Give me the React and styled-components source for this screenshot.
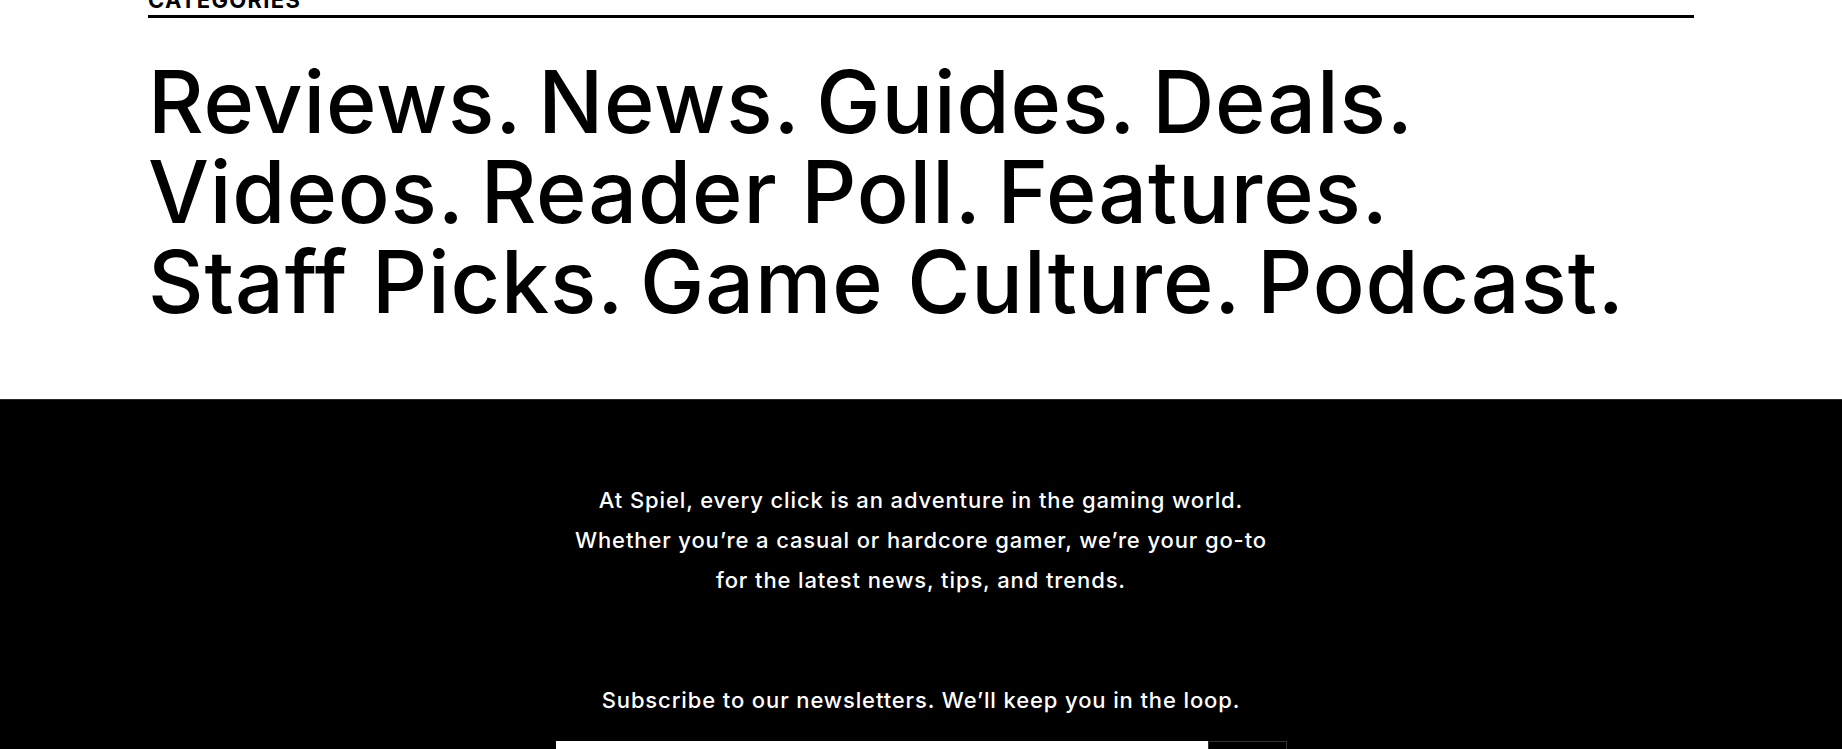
import React from "react";
import styled, { createGlobalStyle } from "styled-components";

const rows = [
  ["Reviews", "News", "Guides", "Deals"],
  ["Videos", "Reader Poll", "Features"],
  ["Staff Picks", "Game Culture", "Podcast"],
];

function App() {
  return (
    <>
      <GlobalStyle />
      <Categories>
        <Label>Categories</Label>
        <CategoryList>
          {rows.map((row, idx) => (
            <Row key={idx}>
              {row.map((name) => (
                <Item key={name} href="#">{name}.</Item>
              ))}
            </Row>
          ))}
        </CategoryList>
      </Categories>
      <Footer>
        <About>
          At Spiel, every click is an adventure in the gaming world.
          <br />
          Whether you’re a casual or hardcore gamer, we’re your go-to
          <br />
          for the latest news, tips, and trends.
        </About>
        <Subscribe>Subscribe to our newsletters. We’ll keep you in the loop.</Subscribe>
        <Form onSubmit={(e) => e.preventDefault()}>
          <input type="email" aria-label="Email" />
          <button type="submit" aria-label="Subscribe"></button>
        </Form>
      </Footer>
    </>
  );
}

export default App;

const GlobalStyle = createGlobalStyle`
  html, body {
    margin: 0;
    padding: 0;
    overflow: hidden;
    background: #ffffff;
    font-family: Inter, "Noto Sans", sans-serif;
    color: #000000;
  }
`;

const Categories = styled.section`
  padding: 0 148px 72px;
  background: #ffffff;
`;

const Label = styled.h4`
  margin: -12px 0 0;
  padding-bottom: 3px;
  font-size: 22px;
  line-height: 24px;
  font-weight: 700;
  letter-spacing: 0.06em;
  text-transform: uppercase;
  border-bottom: 3px solid #000000;
`;

const CategoryList = styled.nav`
  display: flex;
  flex-direction: column;
  margin-top: 39px;
`;

const Row = styled.div`
  display: flex;
  column-gap: 16px;
`;

const Item = styled.a`
  font-size: 86px;
  line-height: 90px;
  font-weight: 500;
  letter-spacing: 0.01em;
  color: #000000;
  text-decoration: none;
  white-space: nowrap;
`;

const Footer = styled.footer`
  display: flex;
  flex-direction: column;
  align-items: center;
  padding: 80px 0 0;
  background: #000000;
  border-top: 1px solid #2a2a2a;
  color: #ffffff;
`;

const About = styled.p`
  margin: 0;
  font-size: 22px;
  line-height: 40px;
  font-weight: 500;
  letter-spacing: 0.04em;
  text-align: center;
`;

const Subscribe = styled.p`
  margin: 80px 0 0;
  font-size: 22px;
  line-height: 40px;
  font-weight: 500;
  letter-spacing: 0.04em;
  text-align: center;
`;

const Form = styled.form`
  display: flex;
  margin-top: 21px;

  input {
    width: 652px;
    height: 52px;
    padding: 0 16px;
    box-sizing: border-box;
    border: none;
    background: #ffffff;
    outline: none;
    font-family: inherit;
    font-size: 18px;
  }

  button {
    width: 79px;
    height: 52px;
    border: 1px solid #333333;
    background: #000000;
    cursor: pointer;
  }
`;
